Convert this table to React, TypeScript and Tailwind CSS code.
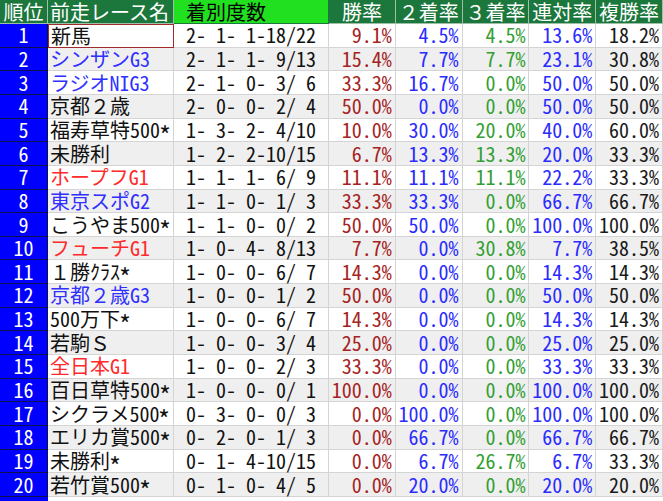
import React from "react";

type Row = {
  name: string;
  tone: "black" | "blue" | "red";
  record: string;
  rates: string[];
};

const rows: Row[] = [
  { name: "新馬", tone: "black", record: "2- 1- 1-18/22", rates: ["9.1%", "4.5%", "4.5%", "13.6%", "18.2%"] },
  { name: "シンザンG3", tone: "blue", record: "2- 1- 1- 9/13", rates: ["15.4%", "7.7%", "7.7%", "23.1%", "30.8%"] },
  { name: "ラジオNIG3", tone: "blue", record: "2- 1- 0- 3/ 6", rates: ["33.3%", "16.7%", "0.0%", "50.0%", "50.0%"] },
  { name: "京都２歳", tone: "black", record: "2- 0- 0- 2/ 4", rates: ["50.0%", "0.0%", "0.0%", "50.0%", "50.0%"] },
  { name: "福寿草特500*", tone: "black", record: "1- 3- 2- 4/10", rates: ["10.0%", "30.0%", "20.0%", "40.0%", "60.0%"] },
  { name: "未勝利", tone: "black", record: "1- 2- 2-10/15", rates: ["6.7%", "13.3%", "13.3%", "20.0%", "33.3%"] },
  { name: "ホープフG1", tone: "red", record: "1- 1- 1- 6/ 9", rates: ["11.1%", "11.1%", "11.1%", "22.2%", "33.3%"] },
  { name: "東京スポG2", tone: "blue", record: "1- 1- 0- 1/ 3", rates: ["33.3%", "33.3%", "0.0%", "66.7%", "66.7%"] },
  { name: "こうやま500*", tone: "black", record: "1- 1- 0- 0/ 2", rates: ["50.0%", "50.0%", "0.0%", "100.0%", "100.0%"] },
  { name: "フューチG1", tone: "red", record: "1- 0- 4- 8/13", rates: ["7.7%", "0.0%", "30.8%", "7.7%", "38.5%"] },
  { name: "１勝ｸﾗｽ*", tone: "black", record: "1- 0- 0- 6/ 7", rates: ["14.3%", "0.0%", "0.0%", "14.3%", "14.3%"] },
  { name: "京都２歳G3", tone: "blue", record: "1- 0- 0- 1/ 2", rates: ["50.0%", "0.0%", "0.0%", "50.0%", "50.0%"] },
  { name: "500万下*", tone: "black", record: "1- 0- 0- 6/ 7", rates: ["14.3%", "0.0%", "0.0%", "14.3%", "14.3%"] },
  { name: "若駒Ｓ", tone: "black", record: "1- 0- 0- 3/ 4", rates: ["25.0%", "0.0%", "0.0%", "25.0%", "25.0%"] },
  { name: "全日本G1", tone: "red", record: "1- 0- 0- 2/ 3", rates: ["33.3%", "0.0%", "0.0%", "33.3%", "33.3%"] },
  { name: "百日草特500*", tone: "black", record: "1- 0- 0- 0/ 1", rates: ["100.0%", "0.0%", "0.0%", "100.0%", "100.0%"] },
  { name: "シクラメ500*", tone: "black", record: "0- 3- 0- 0/ 3", rates: ["0.0%", "100.0%", "0.0%", "100.0%", "100.0%"] },
  { name: "エリカ賞500*", tone: "black", record: "0- 2- 0- 1/ 3", rates: ["0.0%", "66.7%", "0.0%", "66.7%", "66.7%"] },
  { name: "未勝利*", tone: "black", record: "0- 1- 4-10/15", rates: ["0.0%", "6.7%", "26.7%", "6.7%", "33.3%"] },
  { name: "若竹賞500*", tone: "black", record: "0- 1- 0- 4/ 5", rates: ["0.0%", "20.0%", "0.0%", "20.0%", "20.0%"] },
];

const toneClass = {
  black: "text-[#111111]",
  blue: "text-[#3030ff]",
  red: "text-[#ff2a2a]",
};

const rateColors = [
  "text-[#a52323]",
  "text-[#2b2bff]",
  "text-[#33a033]",
  "text-[#2b2bff]",
  "text-[#1a1a1a]",
];

const rateHeads = ["勝率", "２着率", "３着率", "連対率", "複勝率"];

// ascii runs get half-width glyphs, full-width chars keep their own width
const Txt = ({ s }: { s: string }) => {
  const parts = s.match(/\*|[\x20-\x29\x2b-\x7e]+|[^\x20-\x7e]+/g) || [];
  return (
    <>
      {parts.map((p, i) => {
        if (p === "*") {
          // the sheet's asterisk sits low and large
          return (
            <span
              key={i}
              className="inline-block w-[10px] text-center translate-y-[5px] scale-125 [font-feature-settings:'hwid']"
            >
              *
            </span>
          );
        }
        return /^[\x20-\x7e]+$/.test(p) ? (
          <span key={i} className="[font-feature-settings:'hwid']">
            {p}
          </span>
        ) : (
          <span key={i}>{p}</span>
        );
      })}
    </>
  );
};

export default function App() {
  return (
    <div className="w-[663px] h-[501px] overflow-hidden bg-white font-['Noto_Sans_CJK_JP',sans-serif] text-[20px] leading-none">
      <div className="grid grid-cols-[48px_126px_155px_repeat(5,minmax(0,1fr))] grid-rows-[24px_repeat(20,minmax(0,1fr))] h-[497px]">
        {/* header */}
        <div className="bg-[#1c773c] text-white flex items-center justify-center border-r border-b border-[#9fc0a8]">
          順位
        </div>
        <div className="bg-[#1c773c] text-white flex items-center pl-[2px] border-r border-b border-[#9fc0a8]">
          前走レース名
        </div>
        <div className="bg-[#20e020] text-black flex items-center pl-[12px] border-r border-b border-[#1c773c]">
          着別度数
        </div>
        {rateHeads.map((h) => (
          <div
            key={h}
            className="bg-[#1c773c] text-white flex items-center justify-center border-r border-b border-[#9fc0a8]"
          >
            {h}
          </div>
        ))}

        {rows.map((r, i) => {
          const bg = i % 2 === 0 ? "bg-white" : "bg-[#efefef]";
          return (
            <React.Fragment key={i}>
              <div className="bg-[#0000ff] text-white flex items-center justify-center border-r border-b border-[#101050] [font-feature-settings:'hwid']">
                {i + 1}
              </div>
              <div
                className={`${bg} ${toneClass[r.tone]} flex items-center pl-[2px] whitespace-pre border-b border-r ${
                  i === 0 ? "border border-[#a02a2a]" : "border-[#d4d4d4]"
                }`}
              >
                <Txt s={r.name} />
              </div>
              <div className={`${bg} text-[#111111] flex items-center pl-[12px] whitespace-pre border-r border-b border-[#d4d4d4] [font-feature-settings:'hwid']`}>
                {r.record}
              </div>
              {r.rates.map((v, j) => (
                <div
                  key={j}
                  className={`${bg} ${rateColors[j]} flex items-center justify-end pr-[3px] border-r border-b border-[#d4d4d4] [font-feature-settings:'hwid']`}
                >
                  {v}
                </div>
              ))}
            </React.Fragment>
          );
        })}
      </div>
      <div className="grid grid-cols-[48px_1fr] h-[4px]">
        <div className="bg-[#0000ff]" />
        <div className="bg-white" />
      </div>
    </div>
  );
}
